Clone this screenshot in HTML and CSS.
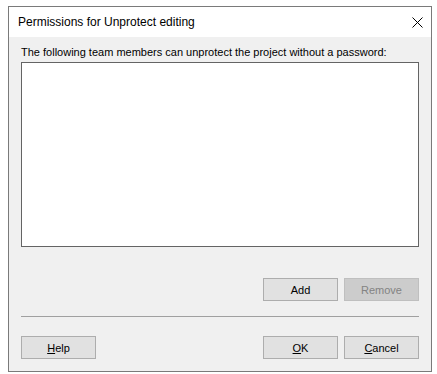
FILE: index.html
```html
<!DOCTYPE html>
<html lang="en">
<head>
    <meta charset="UTF-8">
    <title>Permissions for Unprotect editing</title>
    <link rel="stylesheet" href="styles.css">
</head>
<body>
    <div class="dialog">
        <div class="title-bar">
            <span class="title">Permissions for Unprotect editing</span>
            <button class="close-button" type="button">
                <svg width="11" height="11" viewBox="0 0 11 11">
                    <path d="M0.5 0.5 L10.5 10.5 M10.5 0.5 L0.5 10.5" stroke="#000" stroke-width="1" fill="none"/>
                </svg>
            </button>
        </div>
        <div class="dialog-body">
            <div class="label">The following team members can unprotect the project without a password:</div>
            <div class="member-list"></div>
            <div class="button-row">
                <button class="btn" type="button">Add</button>
                <button class="btn" type="button" disabled>Remove</button>
            </div>
            <div class="separator"></div>
            <div class="button-row footer">
                <button class="btn" type="button"><u>H</u>elp</button>
                <span class="spacer"></span>
                <button class="btn" type="button"><u>O</u>K</button>
                <button class="btn" type="button"><u>C</u>ancel</button>
            </div>
        </div>
    </div>
</body>
</html>
```

FILE: styles.css
```css
body {
    margin: 0;
    padding: 0;
    background-color: #ffffff;
    font-family: "Liberation Sans", Arial, sans-serif;
    font-size: 11px;
}

.dialog {
    margin: 6px 0 0 8px;
    width: 424px;
    height: 366px;
    box-sizing: border-box;
    border: 1px solid #7a7a7a;
    background-color: #f0f0f0;
    display: flex;
    flex-direction: column;
}

.title-bar {
    height: 30px;
    background-color: #ffffff;
    display: flex;
    align-items: center;
    padding: 0 8px 0 9px;
}

.title {
    flex: 1;
    font-family: "Liberation Sans", Arial, sans-serif;
    font-size: 12px;
    color: #000;
}

.close-button {
    background: none;
    border: none;
    padding: 0;
    width: 11px;
    height: 11px;
    margin-right: 0;
    display: flex;
}

.dialog-body {
    flex: 1;
    padding: 0 12px 0 12px;
    display: flex;
    flex-direction: column;
}

.label {
    margin-top: 9px;
    line-height: 13px;
    color: #000;
}

.member-list {
    margin-top: 3px;
    height: 185px;
    box-sizing: border-box;
    border: 1px solid #646464;
    background-color: #ffffff;
}

.button-row {
    display: flex;
    justify-content: flex-end;
    gap: 6px;
    margin-top: 31px;
}

.footer {
    margin-top: 19px;
}

.spacer {
    flex: 1;
}

.btn {
    width: 75px;
    height: 23px;
    box-sizing: border-box;
    border: 1px solid #adadad;
    background-color: #e1e1e1;
    font-family: "Liberation Sans", Arial, sans-serif;
    font-size: 11px;
    color: #000;
    padding: 0;
}

.btn:disabled {
    background-color: #cccccc;
    border-color: #bfbfbf;
    color: #838383;
}

.separator {
    margin-top: 15px;
    height: 1px;
    background-color: #a0a0a0;
}
```
